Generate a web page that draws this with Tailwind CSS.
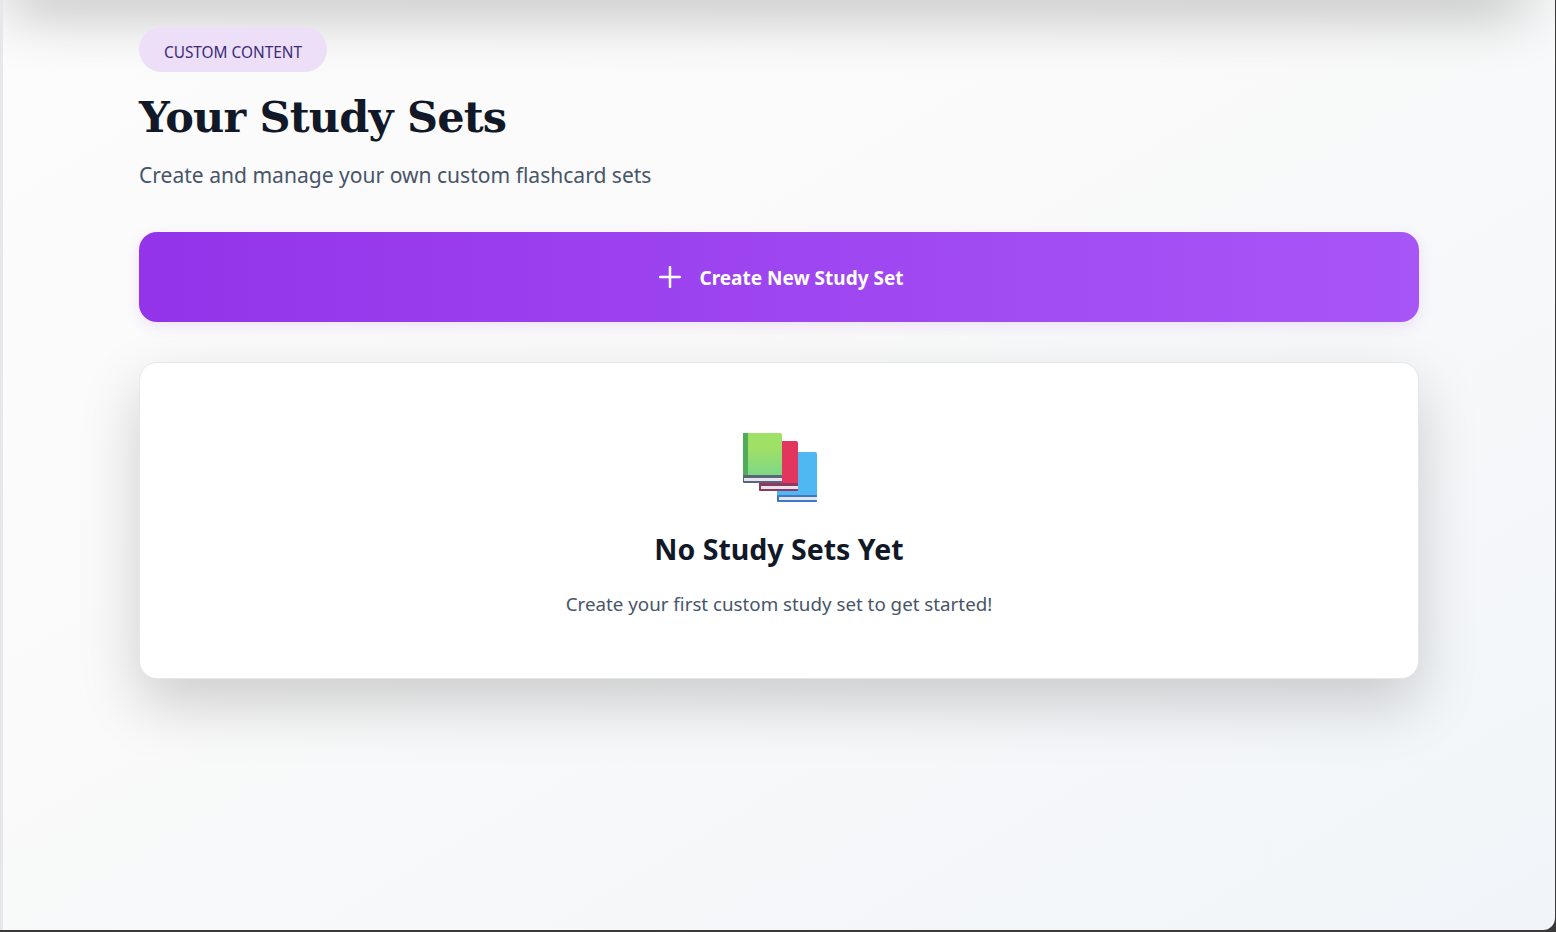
<!DOCTYPE html>
<html lang="en">
<head>
  <meta charset="UTF-8">
  <meta name="viewport" content="width=device-width, initial-scale=1.0">
  <title>Your Study Sets</title>
  <script src="https://cdn.jsdelivr.net/npm/@tailwindcss/browser@4"></script>
</head>
<body class="h-[932px] w-[1556px] overflow-hidden bg-[#3a3a3a] font-['Noto_Sans',sans-serif]">
  <!-- window -->
  <div class="relative h-[930px] w-[1555px] overflow-hidden rounded-br-[12px] border-l-[3px] border-[#e6e7ea] bg-gradient-to-br from-[#fcfcfc] via-[#fafafa] via-40% to-[#f1f5f9]">
    <!-- nav bar sits above the fold, only its shadow shows -->
    <div class="absolute -top-[40px] left-0 right-[24px] h-[40px] rounded-b-[24px] bg-white shadow-[0_10px_60px_rgba(0,0,0,0.3)]"></div>

    <main class="relative ml-[136px] w-[1280px] pt-[27px]">
      <span class="inline-flex h-[45px] w-[188px] items-center justify-center rounded-full bg-[#ecdff7] pt-[7px] text-[15.4px] text-[#3b2a78]">CUSTOM CONTENT</span>

      <h1 class="mt-[17px] font-['DejaVu_Serif',serif] text-[43px] leading-[56px] font-bold tracking-[-0.8px] text-[#111827]">Your Study Sets</h1>
      <p class="mt-[14px] text-[21.05px] leading-[32px] text-[#475569]">Create and manage your own custom flashcard sets</p>

      <button class="mt-[41px] flex h-[90px] w-full items-center justify-center gap-[18px] rounded-[18px] bg-gradient-to-r from-[#9333ea] to-[#a855f7] pl-[5px] text-[19px] font-bold text-white shadow-[0_4px_14px_rgba(147,51,234,0.12)]">
        <svg width="22" height="22" viewBox="0 0 22 22" fill="none" stroke="currentColor" stroke-width="2.5" stroke-linecap="round"><path d="M11 1v20M1 11h20"/></svg>
        <span class="pt-[2px]">Create New Study Set</span>
      </button>

      <section class="mt-[40px] flex h-[317px] flex-col items-center rounded-[18px] border border-[#e5e7eb] bg-white pt-[70px] shadow-[0_25px_60px_rgba(0,0,0,0.18)]">
        <svg class="ml-[2px]" width="74" height="69" viewBox="0 0 74 69">
          <defs>
            <linearGradient id="green-cover" x1="0" y1="0" x2="0" y2="1">
              <stop offset="0.3" stop-color="#9fe066"/>
              <stop offset="0.8" stop-color="#80d884"/>
            </linearGradient>
          </defs>
          <!-- blue book -->
          <rect x="34" y="19" width="40" height="50" rx="2" fill="#4fb8f2"/>
          <rect x="34" y="62" width="40" height="7" rx="1" fill="#3f79c4"/>
          <rect x="36" y="64" width="38" height="3" fill="#e3e5ee"/>
          <!-- red book -->
          <rect x="16" y="8" width="39" height="50" rx="2" fill="#e3365f"/>
          <rect x="16" y="50" width="39" height="8" rx="1" fill="#8d3a63"/>
          <rect x="18" y="53" width="37" height="3" fill="#e9e4ea"/>
          <!-- green book -->
          <rect x="0" y="0" width="39" height="50" rx="2" fill="url(#green-cover)"/>
          <rect x="0" y="0" width="5" height="43" fill="#52ab58"/>
          <rect x="0" y="42" width="39" height="8" rx="1" fill="#5b6478"/>
          <rect x="1" y="45" width="38" height="3" fill="#e6e6f0"/>
        </svg>
        <h2 class="mt-[25px] text-[28.5px] leading-[44px] font-bold text-[#111827]">No Study Sets Yet</h2>
        <p class="mt-[19px] text-[18.75px] leading-[28px] text-[#475569]">Create your first custom study set to get started!</p>
      </section>
    </main>
  </div>
</body>
</html>
